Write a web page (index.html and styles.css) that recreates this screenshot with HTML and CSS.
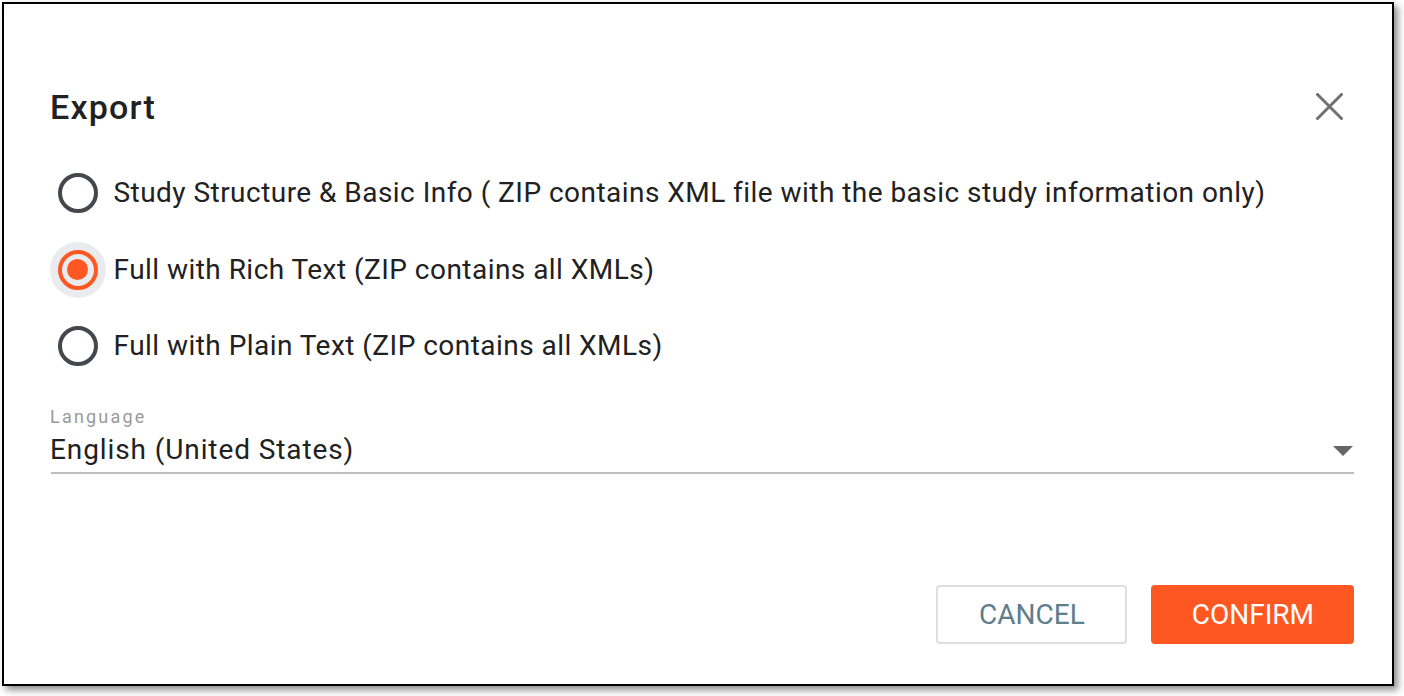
FILE: index.html
```html
<!DOCTYPE html>
<html lang="en">
<head>
<meta charset="utf-8">
<title>Export</title>
<link rel="stylesheet" href="styles.css">
</head>
<body>
<div class="page">
  <div class="dialog">
    <div class="dialog-header">
      <h1 class="dialog-title">Export</h1>
      <button class="close-btn" aria-label="Close">
        <svg width="27" height="27" viewBox="0 0 27 27"><path d="M1.5 1.5 L25.5 25.5 M25.5 1.5 L1.5 25.5" stroke="#707070" stroke-width="3" stroke-linecap="round" fill="none"/></svg>
      </button>
    </div>
    <div class="radio-group">
      <label class="radio-row">
        <span class="radio"><span class="ring"></span></span>
        <span class="radio-label">Study Structure &amp; Basic Info ( ZIP contains XML file with the basic study information only)</span>
      </label>
      <label class="radio-row">
        <span class="radio checked"><span class="ring"><span class="dot"></span></span></span>
        <span class="radio-label">Full with Rich Text (ZIP contains all XMLs)</span>
      </label>
      <label class="radio-row">
        <span class="radio"><span class="ring"></span></span>
        <span class="radio-label">Full with Plain Text (ZIP contains all XMLs)</span>
      </label>
    </div>
    <div class="field">
      <div class="field-label">Language</div>
      <div class="select">
        <span class="select-value">English (United States)</span>
        <svg class="select-arrow" width="20" height="10" viewBox="0 0 20 10"><path d="M0 0 L20 0 L10 10 Z" fill="#666"/></svg>
      </div>
    </div>
    <div class="actions">
      <button class="btn btn-cancel">CANCEL</button>
      <button class="btn btn-confirm">CONFIRM</button>
    </div>
  </div>
</div>
</body>
</html>
```

FILE: styles.css
```css
* { box-sizing: border-box; }
html, body { margin: 0; padding: 0; background: #fff; }
body { font-family: Roboto, "Noto Sans", "Liberation Sans", sans-serif; color: #212121; }
.page { padding: 2px 0 0 2px; width: 1404px; height: 696px; }
.dialog {
  width: 1392px;
  height: 684px;
  border: 2px solid #000;
  background: #fff;
  box-shadow: 4px 4px 7px rgba(0,0,0,0.45);
  padding: 83px 38px 40px 47px;
  display: flex;
  flex-direction: column;
}
.dialog-header { display: flex; align-items: center; justify-content: space-between; height: 40px; }
.dialog-title { margin: 0 0 0 -1px; font-size: 34px; font-weight: 500; line-height: 40px; letter-spacing: 1.2px; color: #212121; }
.close-btn { border: 0; background: none; padding: 0; margin: -2px 11px 0 0; width: 27px; height: 27px; display: flex; }
.radio-group { margin-top: 28px; display: flex; flex-direction: column; }
.radio-row { height: 76.5px; display: flex; align-items: center; }
.radio { width: 56px; height: 56px; margin-left: -1.5px; margin-right: 8px; border-radius: 50%; display: flex; align-items: center; justify-content: center; }
.radio.checked { background: #e9ebee; }
.ring { width: 40px; height: 40px; border: 4px solid #45474e; border-radius: 50%; display: flex; align-items: center; justify-content: center; }
.radio.checked .ring { border-color: #ff5722; }
.dot { width: 21px; height: 21px; border-radius: 50%; background: #ff5722; }
.radio-label { font-size: 28px; line-height: 34px; letter-spacing: 0.46px; color: #212121; }
.field { margin-top: 21px; }
.field-label { font-size: 18px; line-height: 22px; letter-spacing: 2.2px; color: #9a9a9a; margin-left: -1px; }
.select { margin-top: 5px; display: flex; align-items: center; justify-content: space-between; padding-bottom: 5px; border-bottom: 2px solid #bdbdbd; }
.select-value { font-size: 28px; line-height: 34px; letter-spacing: 0.9px; color: #212121; margin-left: -1px; }
.select-arrow { margin: 3px 1px 0 0; }
.actions { margin-top: auto; display: flex; justify-content: flex-end; gap: 24px; }
.btn { height: 59px; font-family: inherit; font-size: 28px; border-radius: 4px; cursor: pointer; }
.btn-cancel { padding: 0 40px 0 41px; background: #fff; border: 2px solid #dedede; color: #607d8b; }
.btn-confirm { padding: 0 40px 0 41px; background: #ff5722; border: 0; color: #fff; }
```
